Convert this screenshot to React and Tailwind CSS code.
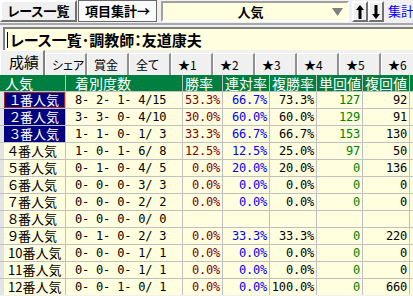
import React from "react";

const rows = [
  ["１番人気", "8- 2- 1- 4/15", "53.3%", "66.7%", "73.3%", "127", "92"],
  ["２番人気", "3- 3- 0- 4/10", "30.0%", "60.0%", "60.0%", "129", "91"],
  ["３番人気", "1- 1- 0- 1/ 3", "33.3%", "66.7%", "66.7%", "153", "130"],
  ["４番人気", "1- 0- 1- 6/ 8", "12.5%", "12.5%", "25.0%", "97", "50"],
  ["５番人気", "0- 1- 0- 4/ 5", "0.0%", "20.0%", "20.0%", "0", "136"],
  ["６番人気", "0- 0- 0- 3/ 3", "0.0%", "0.0%", "0.0%", "0", "0"],
  ["７番人気", "0- 0- 0- 2/ 2", "0.0%", "0.0%", "0.0%", "0", "0"],
  ["８番人気", "0- 0- 0- 0/ 0", "", "", "", "", ""],
  ["９番人気", "0- 1- 0- 2/ 3", "0.0%", "33.3%", "33.3%", "0", "220"],
  ["10番人気", "0- 0- 0- 1/ 1", "0.0%", "0.0%", "0.0%", "0", "0"],
  ["11番人気", "0- 0- 0- 1/ 1", "0.0%", "0.0%", "0.0%", "0", "0"],
  ["12番人気", "0- 0- 1- 0/ 1", "0.0%", "0.0%", "100.0%", "0", "660"],
];

const tabs = ["シェア", "賞金", "全て", "★1", "★2", "★3", "★4", "★5", "★6"];

const mono = "font-['DejaVu_Sans_Mono',monospace] text-[12px] tracking-[-0.2px] whitespace-pre";

function Arrow({ down }) {
  return (
    <svg width="8" height="16" viewBox="0 0 8 16" className={down ? "rotate-180" : ""}>
      <polygon points="4,1 0,6 8,6" fill="#000" />
      <rect x="2.5" y="5" width="3" height="10" fill="#000" />
    </svg>
  );
}

export default function App() {
  return (
    <div className="w-[413px] h-[296px] overflow-hidden bg-[#f0f0f0] font-['Noto_Sans_CJK_JP',sans-serif] [font-feature-settings:'palt'] text-black">
      {/* toolbar */}
      <div className="flex h-[22px] items-stretch whitespace-nowrap">
        <div className="w-[77px] shrink-0 flex items-center justify-center border-2 border-t-white border-l-white border-r-[#707070] border-b-[#707070] text-[13px] font-bold">
          レース一覧
        </div>
        <div className="ml-px w-[79px] shrink-0 flex items-center justify-center border border-[#6a6a6a] bg-[#fafafa] text-[13px] font-bold">
          項目集計→
        </div>
        <div className="ml-[4px] mt-px w-[188px] shrink-0 flex items-center border-2 border-t-[#a0a0a0] border-l-[#a0a0a0] border-r-white border-b-white bg-[#ffffe0]">
          <span className="flex-1 text-center text-[13px] font-bold pl-[6px]">人気</span>
          <svg width="11" height="8" viewBox="0 0 11 8" className="mr-[4px]">
            <polygon points="0,0 11,0 5.5,8" fill="#808080" />
          </svg>
        </div>
        <div className="ml-[3px] mt-px w-[16px] shrink-0 flex items-center justify-center border-2 border-t-white border-l-white border-r-[#707070] border-b-[#707070]">
          <Arrow />
        </div>
        <div className="mt-px w-[16px] shrink-0 flex items-center justify-center border-2 border-t-white border-l-white border-r-[#707070] border-b-[#707070]">
          <Arrow down />
        </div>
        <div className="ml-[4px] shrink-0 flex items-center text-[13px] text-[#0000ff]">集計</div>
      </div>

      {/* separator */}
      <div className="mt-px h-[2px] bg-[#a8a8a8]" />

      {/* title */}
      <div className="mt-[2px] ml-[3px] h-[23px] flex items-center border-t-2 border-l-2 border-[#808080] bg-[#ffffe0]">
        <div className="ml-[2px] w-px h-[16px] bg-black" />
        <span className="ml-[2px] text-[15px] font-bold leading-none whitespace-nowrap">レース一覧･調教師：友道康夫</span>
      </div>

      {/* tabs */}
      <div className="flex items-end h-[25px] whitespace-nowrap overflow-hidden">
        <div className="w-[45px] shrink-0 h-[25px] pt-[1px] pl-[8px] border-t border-l border-white border-r-2 border-r-[#808080] text-[15px] leading-[20px]">
          成績
        </div>
        {tabs.map((t) => (
          <div
            key={t}
            className="w-[42px] shrink-0 h-[22px] flex items-center pl-[6px] border-t border-l border-white border-r-2 border-r-[#909090] text-[12px]"
          >
            {t}
          </div>
        ))}
      </div>

      {/* table */}
      <div className="grid grid-cols-[65px_116px_39px_46px_46px_45px_46px_1fr] gap-px bg-[#c0c0c0] auto-rows-[16px]">
        {["人気", "着別度数", "勝率", "連対率", "複勝率", "単回値", "複回値", ""].map((h, i) => (
          <div
            key={i}
            className={`bg-[#008040] text-white text-[14px] leading-[16px] whitespace-nowrap ${
              i === 0 ? "pl-[5px]" : i === 1 ? "pl-[9px]" : "pl-[2px]"
            }`}
          >
            {h}
          </div>
        ))}
        {rows.map((r, i) => {
          const sel = i < 3;
          return (
            <React.Fragment key={i}>
              <div className="bg-[#e4e4e4] pl-[4px]">
                <div
                  className={`h-full text-[13px] leading-[16px] whitespace-nowrap ${
                    sel ? "bg-[#000080] text-white pl-[6px]" : "bg-[#ffffe0] pl-[4px]"
                  } ${i === 0 ? "shadow-[inset_0_0_0_1px_#9a2a2a]" : ""}`}
                >
                  {r[0]}
                </div>
              </div>
              <div className={`bg-[#ffffe0] pl-[9px] leading-[16px] ${mono}`}>{r[1]}</div>
              <div className={`bg-[#ffffe0] text-right pr-[2px] leading-[16px] text-[#800000] ${mono}`}>{r[2]}</div>
              <div className={`bg-[#ffffe0] text-right pr-[2px] leading-[16px] text-[#0000ff] ${mono}`}>{r[3]}</div>
              <div className={`bg-[#ffffe0] text-right pr-[2px] leading-[16px] ${mono}`}>{r[4]}</div>
              <div className={`bg-[#ffffe0] text-right pr-[2px] leading-[16px] text-[#008000] ${mono}`}>{r[5]}</div>
              <div className={`bg-[#ffffe0] text-right pr-[2px] leading-[16px] ${mono}`}>{r[6]}</div>
              <div className="bg-[#ffffe0]" />
            </React.Fragment>
          );
        })}
      </div>
    </div>
  );
}
